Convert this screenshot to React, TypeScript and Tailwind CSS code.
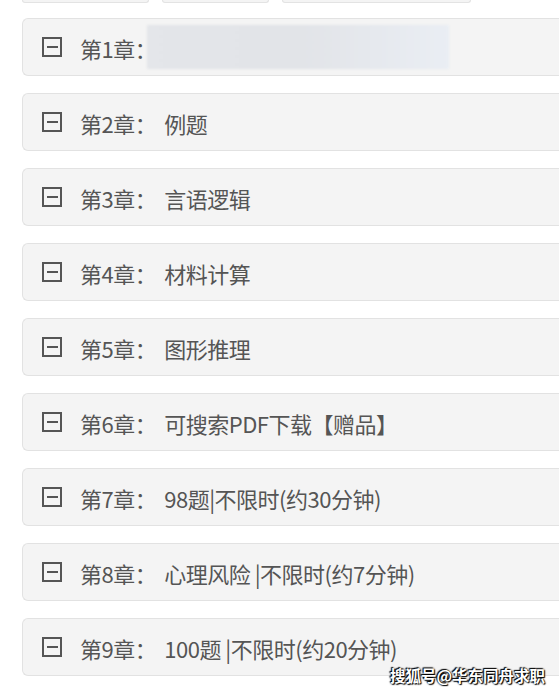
const chapters = [
  "",
  "例题",
  "言语逻辑",
  "材料计算",
  "图形推理",
  "可搜索PDF下载【赠品】",
  "98题|不限时(约30分钟)",
  "心理风险 |不限时(约7分钟)",
  "100题 |不限时(约20分钟)",
];

function MinusBox() {
  return (
    <svg width="20" height="20" viewBox="0 0 20 20" className="shrink-0">
      <rect x="1" y="1" width="18" height="18" fill="none" stroke="#555" strokeWidth="2" />
      <line x1="5" y1="10" x2="16" y2="10" stroke="#555" strokeWidth="2" />
    </svg>
  );
}

export default function App() {
  return (
    <div
      className="relative h-[695px] w-[559px] overflow-hidden bg-white"
      style={{ fontFamily: '"Noto Sans CJK SC", "Noto Sans", sans-serif' }}
    >
      <div className="flex gap-[13px] pl-[22px]">
        <div className="h-[3px] w-[127px] rounded-b-md border border-t-0 border-[#e3e3e3] bg-[#f4f4f4]" />
        <div className="h-[3px] w-[107px] rounded-b-md border border-t-0 border-[#e3e3e3] bg-[#f4f4f4]" />
        <div className="h-[3px] w-[189px] rounded-b-md border border-t-0 border-[#e3e3e3] bg-[#f4f4f4]" />
      </div>
      <div className="mt-[15px] flex flex-col gap-[17px] pl-[22px]">
        {chapters.map((title, i) => (
          <div
            key={i}
            className="flex h-[58px] w-[560px] items-center rounded-l-md border border-r-0 border-[#e2e2e2] bg-[#f4f4f4] pl-[19px]"
          >
            <MinusBox />
            <span className="ml-[18px] translate-y-[1px] text-[22px] leading-none tracking-[-0.5px] text-[#555]">
              第{i + 1}章：
            </span>
            {i === 0 ? (
              <div className="-ml-[9px] h-[44px] w-[302px] bg-gradient-to-r from-[#e4e6ea] via-[#e2e4e8] to-[#eaeef4] blur-[1px]" />
            ) : (
              <span className="ml-[8px] translate-y-[1px] whitespace-pre text-[22px] leading-none tracking-[-0.5px] text-[#555]">
                {title}
              </span>
            )}
          </div>
        ))}
      </div>
      <div
        className="absolute left-[390px] top-[668px] whitespace-nowrap text-[15.5px] font-bold leading-none text-white"
        style={{ textShadow: "0 0 2px #000, 1px 1px 1px #000, -1px -1px 1px #000" }}
      >
        搜狐号@华东同舟求职
      </div>
    </div>
  );
}
